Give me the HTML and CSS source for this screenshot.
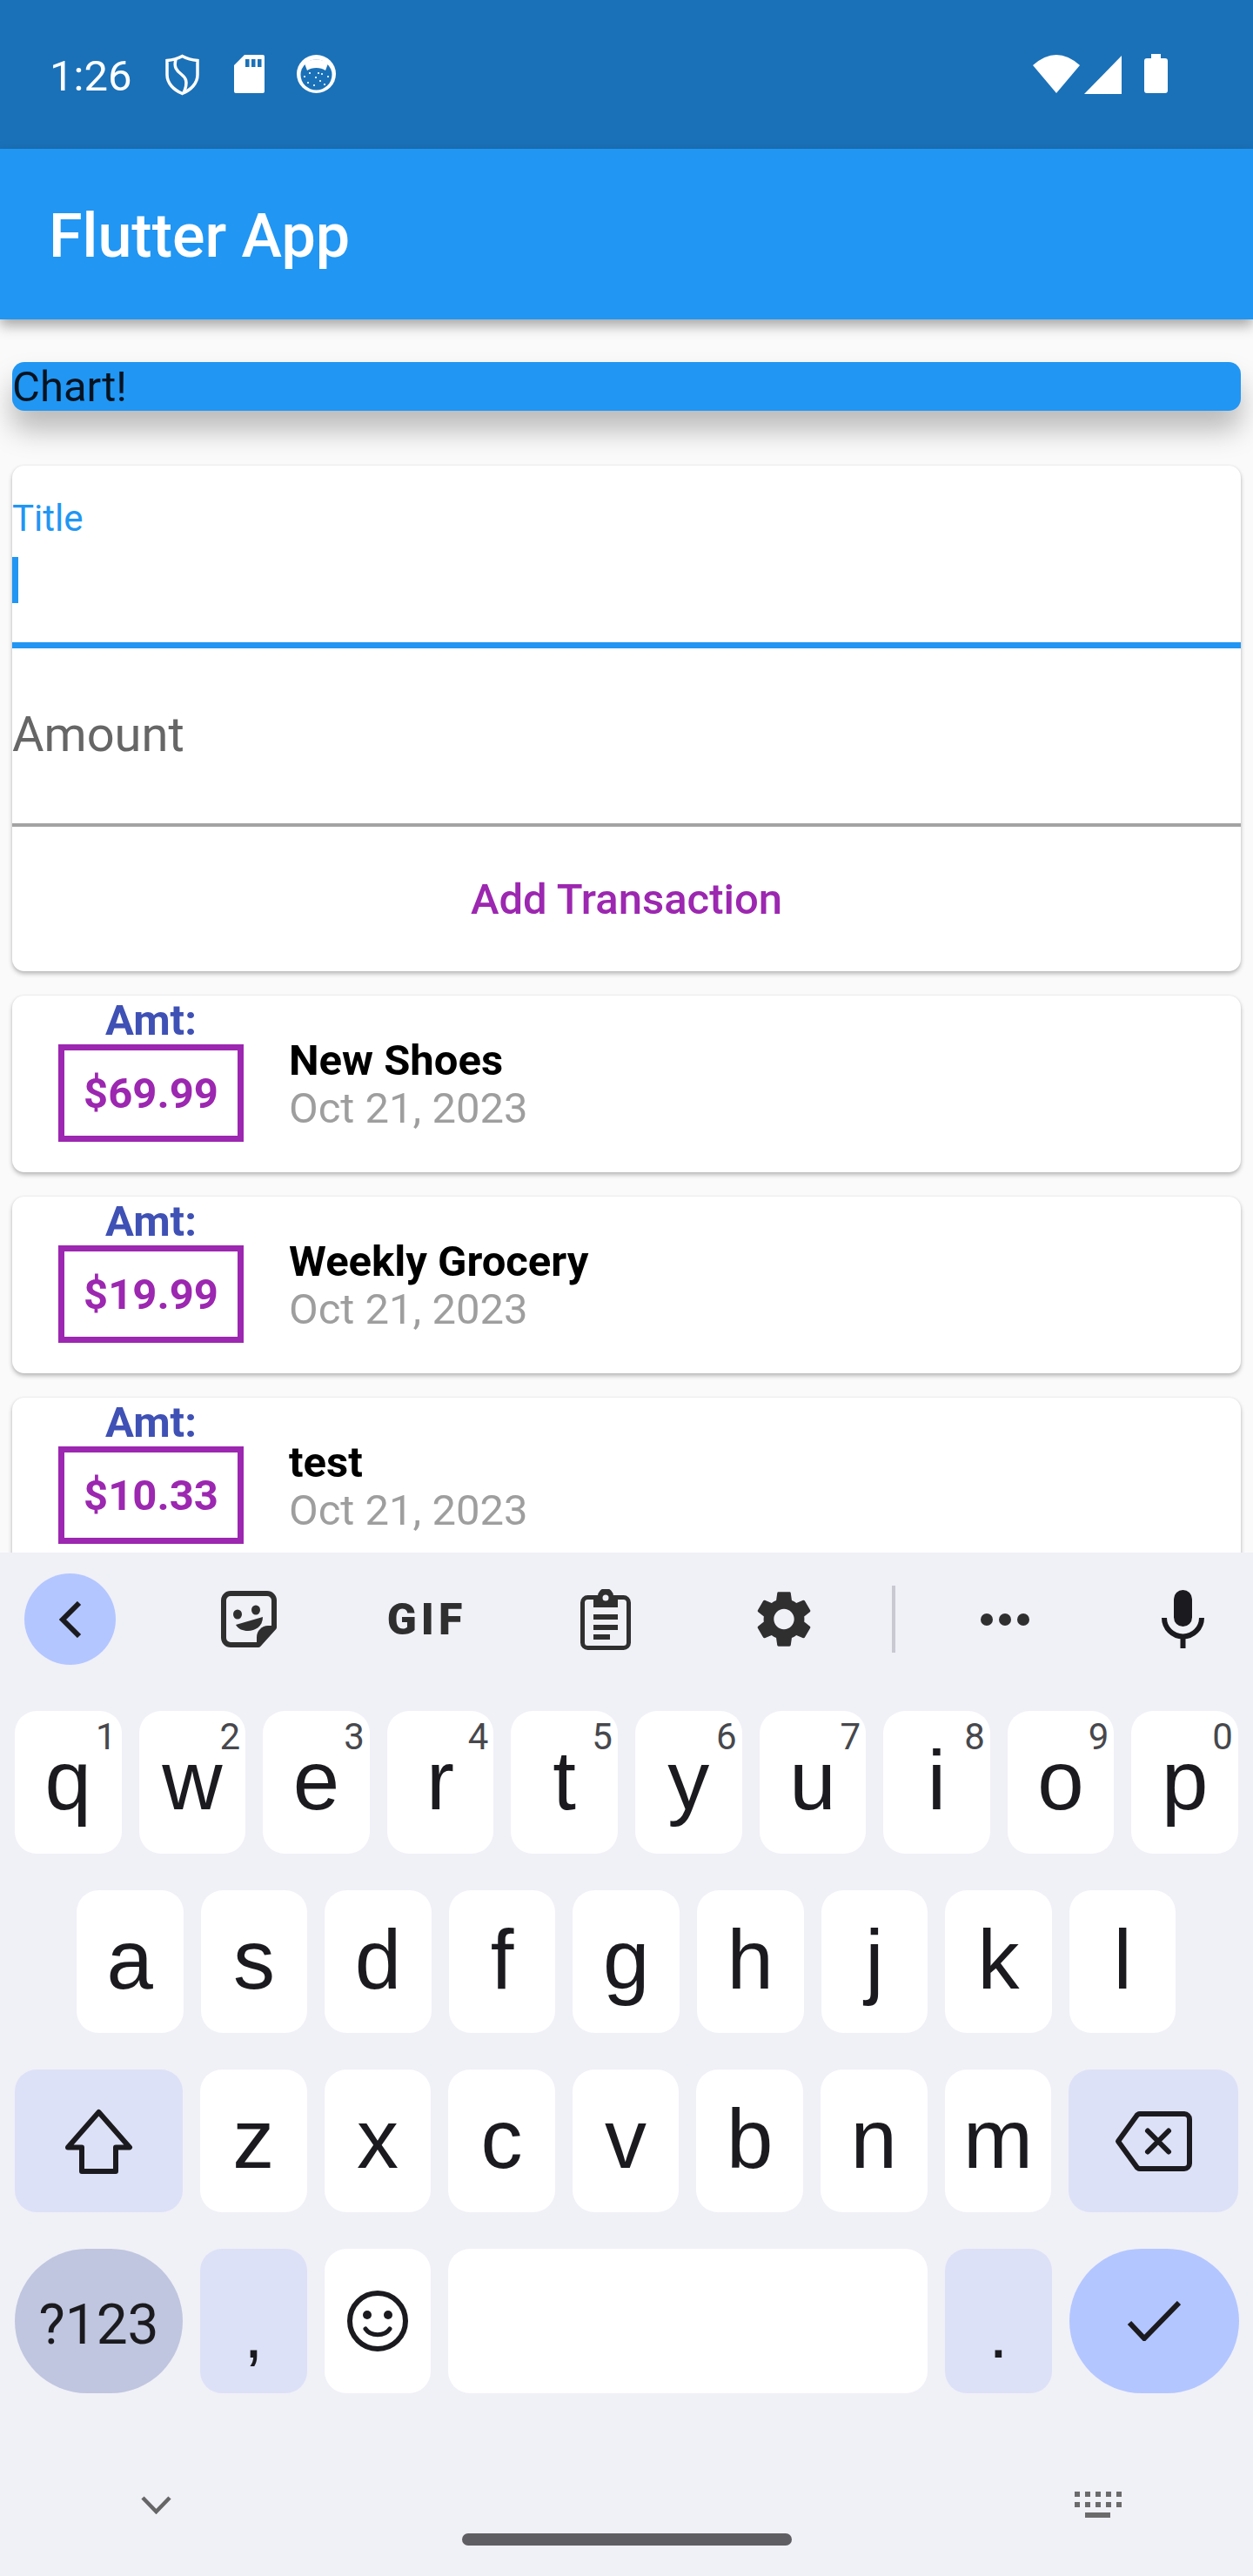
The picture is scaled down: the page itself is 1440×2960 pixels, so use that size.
FILE: index.html
```html
<!DOCTYPE html>
<html lang="en">
<head>
<meta charset="utf-8">
<title>Flutter App</title>
<link rel="stylesheet" href="styles.css">
</head>
<body>
<div class="screen">
  <header class="status">
    <span class="time">1:26</span>
    <svg class="ic-shield" viewBox="0 0 39 48"><path d="M19.500 2.500C25 5.500 31 7 37 7.500V24C37 34 29 41.500 19.500 45.500 10 41.500 2 34 2 24V7.500C8 7 14 5.500 19.500 2.500Z" fill="none" stroke="#fff" stroke-width="3.500"/><path d="M12 6.500C9.500 15 13 19 18 23 23 27 27 31 21 45" fill="none" stroke="#fff" stroke-width="3.500"/></svg>
    <svg class="ic-sd" viewBox="0 0 35 44"><path d="M12 0H33A2 2 0 0 1 35 2V42A2 2 0 0 1 33 44H2A2 2 0 0 1 0 42V12Z" fill="#fff"/><path d="M13 5h4.500v9H13zM20 5h4.500v9H20zM27 5h4.500v9H27z" fill="#1A71B8"/></svg>
    <svg class="ic-cat" viewBox="0 0 45 44"><ellipse cx="22.500" cy="22" rx="22.500" ry="22" fill="#fff"/><ellipse cx="22.500" cy="23" rx="18" ry="17.500" fill="#1A71B8"/><path d="M9 10C14 4 31 4 36 10L33 18C28 14 17 14 12 18Z" fill="#fff"/><path d="M8 24h2v2H8zM14 20h2v2h-2zM21 25h2v2h-2zM28 21h2v2h-2zM35 24h2v2h-2zM12 31h2v2h-2zM19 34h2v2h-2zM26 29h2v2h-2zM31 33h2v2h-2zM24 20h2v2h-2z" fill="#d5e6f5"/></svg>
    <span class="status-fill"></span>
    <svg class="ic-wifi" viewBox="0 0 54 44"><path d="M27 44 0 12Q27-12 54 12Z" fill="#fff"/></svg>
    <svg class="ic-signal" viewBox="0 0 43 44"><path d="M0 44 43 0V44Z" fill="#fff"/></svg>
    <svg class="ic-battery" viewBox="0 0 27 45"><path d="M8 0H19V5H24A3 3 0 0 1 27 8V42A3 3 0 0 1 24 45H3A3 3 0 0 1 0 42V8A3 3 0 0 1 3 5H8Z" fill="#fff"/></svg>
  </header>
  <div class="appbar"><h1 class="appbar-title">Flutter App</h1></div>

  <main class="content">
    <section class="chart">Chart!</section>

    <form class="form-card">
      <div class="field field-focus">
        <div class="field-label">Title</div>
        <div class="caret"></div>
      </div>
      <div class="field field-idle">
        <div class="field-hint">Amount</div>
      </div>
      <div class="add-btn">Add Transaction</div>
    </form>

    <article class="tx">
      <div class="tx-amt">
        <div class="amt-label">Amt:</div>
        <div class="amt-box">$69.99</div>
      </div>
      <div class="tx-info">
        <div class="tx-title">New Shoes</div>
        <div class="tx-date">Oct 21, 2023</div>
      </div>
    </article>
    <article class="tx">
      <div class="tx-amt">
        <div class="amt-label">Amt:</div>
        <div class="amt-box">$19.99</div>
      </div>
      <div class="tx-info">
        <div class="tx-title">Weekly Grocery</div>
        <div class="tx-date">Oct 21, 2023</div>
      </div>
    </article>
    <article class="tx">
      <div class="tx-amt">
        <div class="amt-label">Amt:</div>
        <div class="amt-box">$10.33</div>
      </div>
      <div class="tx-info">
        <div class="tx-title">test</div>
        <div class="tx-date">Oct 21, 2023</div>
      </div>
    </article>
  </main>

  <section class="keyboard">
    <div class="toolbar">
      <div class="tool tool-back"><svg class="ic-back" viewBox="0 0 26 42"><path d="M23 2 4 21 23 40" fill="none" stroke="#1b1b1f" stroke-width="6"/></svg></div>
      <div class="tool"><svg class="ic-sticker" viewBox="0 0 64 65"><path d="M11 3H53A8 8 0 0 1 61 11V42L43 62H11A8 8 0 0 1 3 54V11A8 8 0 0 1 11 3Z" fill="none" stroke="#2f2f2f" stroke-width="6" stroke-linejoin="round"/><path d="M63 40H54C47 40 41 46 41 53V64Z" fill="#2f2f2f"/><ellipse cx="19" cy="27" rx="5" ry="5.500" fill="#2f2f2f"/><ellipse cx="40" cy="22" rx="5" ry="5.500" fill="#2f2f2f"/><path d="M17 39 48 30C48 41 39 46 31 46 25 46 20 44 17 39Z" fill="#2f2f2f"/></svg></div>
      <div class="tool"><span class="gif">GIF</span></div>
      <div class="tool"><svg class="ic-clip" viewBox="0 0 58 70"><rect x="2.500" y="9.500" width="53" height="58" rx="6" fill="none" stroke="#2f2f2f" stroke-width="5"/><path d="M15 8H20A9 9 0 0 1 38 8H43V21H15Z" fill="#2f2f2f"/><circle cx="29" cy="10" r="3.500" fill="#f0f0f7"/><path d="M15 29h28v6H15zM15 41h28v6H15zM15 52h19v6H15z" fill="#2f2f2f"/></svg></div>
      <div class="tool"><svg class="ic-gear" viewBox="2.500 2 19 20"><path fill="#2f2f2f" d="M19.140 12.940c.04-.3.06-.61.06-.94 0-.32-.02-.64-.07-.94l2.030-1.580c.18-.14.23-.41.12-.61l-1.920-3.320c-.12-.22-.37-.29-.59-.22l-2.390.96c-.5-.38-1.030-.7-1.620-.94l-.36-2.540c-.04-.24-.24-.41-.48-.41h-3.840c-.24 0-.43.17-.47.41l-.36 2.540c-.59.24-1.130.57-1.620.94l-2.390-.96c-.22-.08-.47 0-.59.22L2.740 8.870c-.12.21-.08.47.12.61l2.030 1.580c-.05.3-.09.63-.09.94s.02.64.07.94l-2.030 1.580c-.18.14-.23.41-.12.61l1.920 3.320c.12.22.37.29.59.22l2.390-.96c.5.38 1.030.7 1.620.94l.36 2.540c.05.24.24.41.48.41h3.840c.24 0 .44-.17.47-.41l.36-2.540c.59-.24 1.130-.56 1.620-.94l2.390.96c.22.08.47 0 .59-.22l1.920-3.320c.12-.22.07-.47-.12-.61l-2.010-1.580zM12 15.600c-1.980 0-3.600-1.620-3.600-3.600s1.620-3.600 3.600-3.600 3.600 1.620 3.600 3.600-1.620 3.600-3.600 3.600z"/></svg></div>
      <div class="tool-sep"></div>
      <div class="tool"><svg class="ic-dots" viewBox="0 0 56 14"><circle cx="7" cy="7" r="7" fill="#2f2f2f"/><circle cx="28" cy="7" r="7" fill="#2f2f2f"/><circle cx="49" cy="7" r="7" fill="#2f2f2f"/></svg></div>
      <div class="tool"><svg class="ic-mic" viewBox="0 0 49 67"><rect x="14" y="0" width="21" height="42" rx="10.500" fill="#1b1b1f"/><path d="M3 32A21.500 21.500 0 0 0 46 32" fill="none" stroke="#1b1b1f" stroke-width="6"/><path d="M24.500 53V67" stroke="#1b1b1f" stroke-width="6"/></svg></div>
    </div>

    <div class="rows">
      <div class="row">
        <div class="key"><span class="hint">1</span>q</div>
        <div class="key"><span class="hint">2</span>w</div>
        <div class="key"><span class="hint">3</span>e</div>
        <div class="key"><span class="hint">4</span>r</div>
        <div class="key"><span class="hint">5</span>t</div>
        <div class="key"><span class="hint">6</span>y</div>
        <div class="key"><span class="hint">7</span>u</div>
        <div class="key"><span class="hint">8</span>i</div>
        <div class="key"><span class="hint">9</span>o</div>
        <div class="key"><span class="hint">0</span>p</div>
      </div>
      <div class="row row-home">
        <div class="key">a</div>
        <div class="key">s</div>
        <div class="key">d</div>
        <div class="key">f</div>
        <div class="key">g</div>
        <div class="key">h</div>
        <div class="key">j</div>
        <div class="key">k</div>
        <div class="key">l</div>
      </div>
      <div class="row">
        <div class="key key-wide key-mod key-icon"><svg class="ic-shift" viewBox="0 0 79 75"><path d="M39.500 4 75 44.500H59V72H20V44.500H4Z" fill="none" stroke="#1b1b1f" stroke-width="6" stroke-linejoin="round"/></svg></div>
        <div class="key">z</div>
        <div class="key">x</div>
        <div class="key">c</div>
        <div class="key">v</div>
        <div class="key">b</div>
        <div class="key">n</div>
        <div class="key">m</div>
        <div class="key key-wide key-mod key-icon"><svg class="ic-del" viewBox="0 0 89 69"><path d="M29 3H80A6 6 0 0 1 86 9V60A6 6 0 0 1 80 66H29A5 5 0 0 1 25 63.500L4 34.500 25 5.500A5 5 0 0 1 29 3Z" fill="none" stroke="#1b1b1f" stroke-width="6" stroke-linejoin="round"/><path d="M38 22.500 62 46.500M62 22.500 38 46.500" stroke="#1b1b1f" stroke-width="6" stroke-linecap="round"/></svg></div>
      </div>
      <div class="row row-last">
        <div class="key key-wide key-pill key-sym">?123</div>
        <div class="key key-mod key-punct">,</div>
        <div class="key key-icon"><svg class="ic-emoji" viewBox="0 0 70 70"><circle cx="35" cy="35" r="32" fill="none" stroke="#1b1b1f" stroke-width="6"/><circle cx="23" cy="28" r="5" fill="#1b1b1f"/><circle cx="47" cy="28" r="5" fill="#1b1b1f"/><path d="M21 44C27 53 43 53 49 44" fill="none" stroke="#1b1b1f" stroke-width="5" stroke-linecap="round"/></svg></div>
        <div class="key key-space"></div>
        <div class="key key-mod key-punct">.</div>
        <div class="key key-wide key-enter key-icon"><svg class="ic-check" viewBox="0 0 62 46"><path d="M3 25 20 43 60 2" fill="none" stroke="#1b1b1f" stroke-width="6"/></svg></div>
      </div>
    </div>

    <div class="kb-bottom">
      <div class="kb-actions">
        <svg class="ic-down" viewBox="0 0 35 21"><path d="M2 2 17.500 18 33 2" fill="none" stroke="#666" stroke-width="4.500"/></svg>
        <svg class="ic-kb" viewBox="0 0 54 30"><path fill="#6b6b6b" d="M0 0h6v6H0zM12 0h6v6h-6zM24 0h6v6h-6zM36 0h6v6h-6zM48 0h6v6h-6zM0 12h6v6H0zM12 12h6v6h-6zM24 12h6v6h-6zM36 12h6v6h-6zM48 12h6v6h-6zM12 24h29v6H12z"/></svg>
      </div>
      <div class="home-pill"></div>
    </div>
  </section>
</div>
</body>
</html>
```
FILE: styles.css
```css
* { box-sizing: border-box; }
html, body { margin: 0; padding: 0; }
body { font-family: Roboto, "Noto Sans", sans-serif; background: #fafafa; }

.screen { width: 1440px; height: 2960px; display: flex; flex-direction: column; overflow: hidden; background: #fafafa; }

/* Status bar */
.status { height: 171px; flex: none; background: #1A71B8; display: flex; align-items: flex-start; padding-left: 57px; }
.time { color: #fff; font-size: 49px; line-height: 57px; margin-top: 59px; width: 92px; }
.status svg { display: block; flex: none; }
.ic-shield { width: 39px; height: 48px; margin: 62px 0 0 41px; }
.ic-sd { width: 35px; height: 44px; margin: 63px 0 0 40px; }
.ic-cat { width: 45px; height: 44px; margin: 63px 0 0 37px; }
.status-fill { flex: 1; }
.ic-wifi { width: 54px; height: 44px; margin-top: 63px; }
.ic-signal { width: 43px; height: 44px; margin: 64px 0 0 5px; }
.ic-battery { width: 27px; height: 45px; margin: 62px 98px 0 26px; }

/* App bar */
.appbar { height: 196px; flex: none; background: #2196F3; display: flex; align-items: center; padding: 4px 0 0 56px; position: relative; z-index: 2; box-shadow: 0 7px 14px rgba(0,0,0,.34); }
.appbar-title { margin: 0; color: #fff; font-size: 70px; line-height: 82px; font-weight: 500; }

/* Content */
.content { height: 1417px; flex: none; overflow: hidden; padding: 49px 14px 0; }
.chart { height: 56px; background: #2196F3; border-radius: 14px; color: rgba(0,0,0,.87); font-size: 49px; line-height: 58px; box-shadow: 0 22px 32px rgba(0,0,0,.26); }

.form-card { margin-top: 63px; height: 581px; background: #fff; border-radius: 14px; position: relative; box-shadow: 0 3px 5px rgba(0,0,0,.25), 0 0 3px rgba(0,0,0,.08); }
.field-focus { height: 210px; border-bottom: 7px solid #2196F3; padding-top: 36px; }
.field-label { color: #2196F3; font-size: 42px; line-height: 49px; }
.caret { width: 7px; height: 53px; margin-top: 20px; background: #2196F3; }
.field-idle { height: 205px; border-bottom: 4px solid #a3a3a3; padding-top: 66px; }
.field-hint { color: #666; font-size: 56px; line-height: 66px; }
.add-btn { color: #9C27B0; font-size: 49px; font-weight: 500; line-height: 57px; text-align: center; padding-top: 55px; }

.tx { margin-top: 28px; height: 203px; background: #fff; border-radius: 14px; display: flex; align-items: flex-start; box-shadow: 0 3px 5px rgba(0,0,0,.25), 0 0 3px rgba(0,0,0,.08); }
.tx-amt { width: 213px; margin-left: 53px; flex: none; text-align: center; }
.amt-label { color: #3F51B5; font-size: 49px; font-weight: 700; line-height: 56px; height: 56px; padding-top: 1px; }
.amt-box { height: 112px; border: 7px solid #9C27B0; color: #9C27B0; font-size: 49px; font-weight: 700; line-height: 100px; }
.tx-info { margin: 47px 0 0 52px; }
.tx-title { color: #000; font-size: 49px; font-weight: 700; line-height: 55px; }
.tx-date { color: #9e9e9e; font-size: 49px; line-height: 55px; }

/* Keyboard */
.keyboard { height: 1176px; flex: none; background: #F0F0F7; position: relative; z-index: 3; padding-top: 24px; }
.toolbar { display: flex; align-items: center; height: 105px; padding-left: 28px; gap: 100px; }
.tool { width: 105px; height: 105px; flex: none; display: flex; align-items: center; justify-content: center; }
.tool-back { background: #B3C6FF; border-radius: 50%; }
.tool svg { display: block; }
.ic-back { width: 26px; height: 42px; }
.ic-sticker { width: 64px; height: 65px; }
.ic-clip { width: 58px; height: 70px; }
.ic-gear { width: 62px; height: 65px; }
.ic-dots { width: 56px; height: 14px; }
.ic-mic { width: 49px; height: 67px; }
.gif { color: #2f2f2f; font-size: 50px; font-weight: 900; line-height: 50px; letter-spacing: 5px; }
.tool-sep { width: 4px; height: 77px; background: #c9c9d1; flex: none; margin: 0 -27px 0 -28px; }

.rows { margin-top: 53px; display: flex; flex-direction: column; gap: 42px; }
.row { display: flex; gap: 20px; height: 164px; padding-left: 17px; }
.row-home { padding-left: 88px; }
.row-last { height: 166px; }
.key { width: 122.6px; flex: none; background: #fff; border-radius: 25px; color: #1b1b1f; font-family: "Liberation Sans", Roboto, sans-serif; font-size: 96px; line-height: 112px; padding-top: 24px; text-align: center; position: relative; }
.key-wide { width: 195px; }
.row .key-wide:first-child { width: 193px; }
.key-mod { background: #DDE1F7; }
.key-pill { background: #C0C6DF; border-radius: 83px; }
.key-enter { background: #B3C6FF; border-radius: 83px; }
.key-space { width: 551px; }
.key-icon { display: flex; align-items: center; justify-content: center; padding-top: 0; }
.key-icon svg { display: block; }
.key-sym { font-family: Roboto, sans-serif; font-size: 64px; line-height: 75px; padding-top: 50px; }
.key-punct { font-size: 80px; line-height: 94px; padding-top: 51px; }
.hint { position: absolute; top: 5px; right: 6px; font-family: Roboto, sans-serif; font-size: 42px; line-height: 49px; color: #47484d; }
.ic-shift { width: 79px; height: 75px; }
.ic-del { width: 89px; height: 69px; }
.ic-emoji { width: 70px; height: 70px; }
.ic-check { width: 62px; height: 46px; }

.kb-bottom { padding-top: 105px; }
.kb-actions { display: flex; align-items: center; justify-content: space-between; height: 46px; padding: 0 151px 0 162px; }
.ic-down { width: 35px; height: 21px; display: block; }
.ic-kb { width: 54px; height: 30px; display: block; }
.home-pill { width: 379px; height: 14px; margin: 10px auto 0; border-radius: 7px; background: #5f5f63; }
```
